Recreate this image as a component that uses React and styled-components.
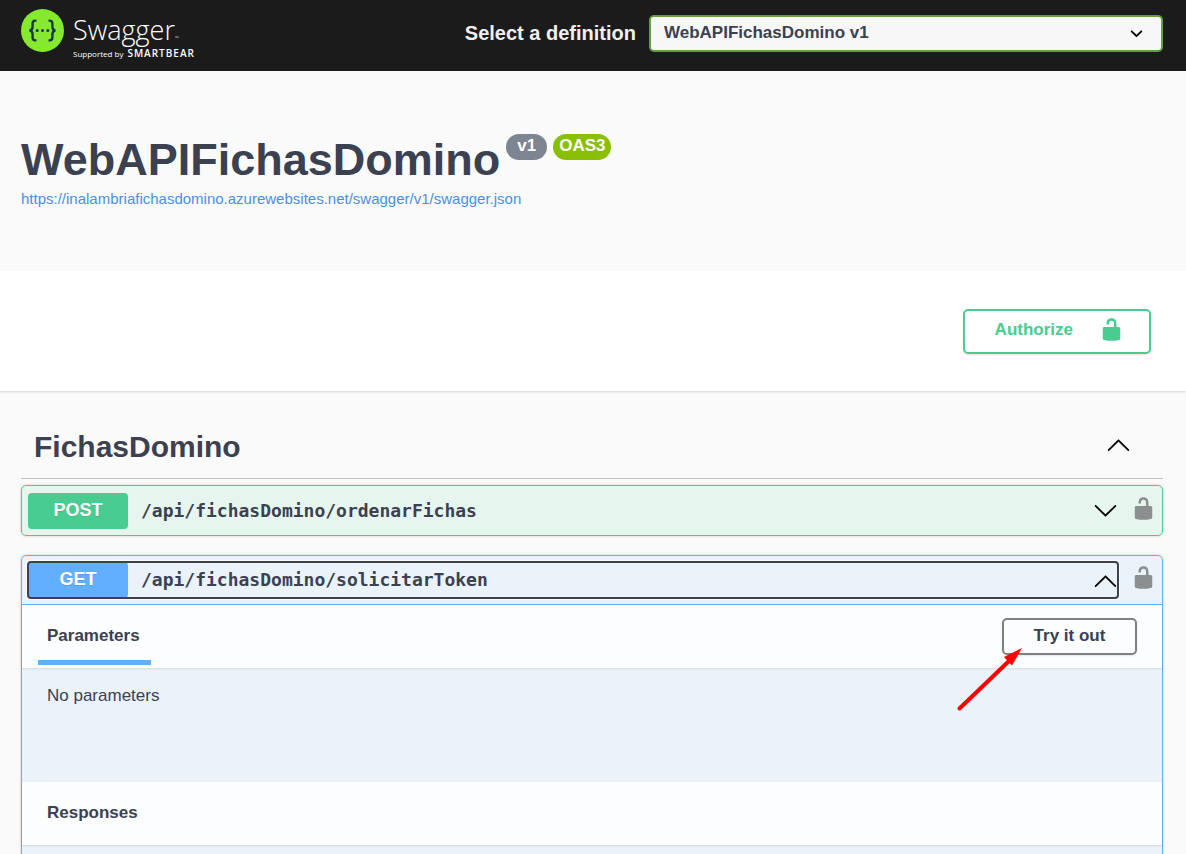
import React, { useState } from "react";
import styled, { createGlobalStyle } from "styled-components";

const GlobalStyle = createGlobalStyle`
  *, *::before, *::after { box-sizing: border-box; }
  body {
    margin: 0;
    background: #fafafa;
    color: #3b4151;
    font-family: "Liberation Sans", Arial, sans-serif;
    font-size: 17px;
  }
  button, select { font: inherit; color: inherit; }
  h1, h2, h3, p { margin: 0; }
`;

const methodColors = { POST: "73, 204, 144", GET: "97, 175, 254" };

const Topbar = styled.header`
  display: flex;
  align-items: flex-start;
  justify-content: space-between;
  height: 71px;
  padding: 0 23px 0 21px;
  background: #1b1b1b;
`;

const Logo = styled.a`
  display: flex;
  gap: 9px;
  padding-top: 9px;
  color: #fff;
  font-family: "Open Sans", sans-serif;
  text-decoration: none;
`;

const LogoMark = styled.svg`
  width: 43px;
  height: 43px;
`;

const LogoText = styled.span`
  display: flex;
  flex-direction: column;
  padding-top: 4px;
`;

const Wordmark = styled.span`
  font-size: 27px;
  font-weight: 300;
  line-height: 34px;

  small {
    font-size: 5px;
    line-height: 1;
  }
`;

const Tagline = styled.span`
  display: flex;
  align-items: baseline;
  gap: 4px;
  font-size: 8px;
  line-height: 12px;

  b {
    font-size: 10px;
    font-weight: 600;
    letter-spacing: 1px;
  }
`;

const DefinitionForm = styled.form`
  display: flex;
  align-items: center;
  gap: 13px;
  padding-top: 15px;

  label {
    padding-bottom: 2px;
    color: #f0f0f0;
    font-size: 20px;
    font-weight: 700;
    line-height: 34px;
  }
`;

const SelectWrap = styled.div`
  position: relative;
  width: 45vw;
  max-width: 514px;

  select {
    display: block;
    width: 100%;
    height: 37px;
    padding: 0 50px 2px 13px;
    border: 2px solid #62a03f;
    border-radius: 5px;
    background: #f7f7f7;
    font-weight: 700;
    appearance: none;
  }

  svg {
    position: absolute;
    top: 6px;
    right: 14px;
    pointer-events: none;
  }
`;

const Info = styled.section`
  padding: 62px 23px 62px 21px;
`;

const TitleRow = styled.div`
  display: flex;
  align-items: flex-start;
  gap: 6px;

  h1 {
    padding-top: 1px;
    font-size: 45px;
    line-height: 52px;
  }
`;

const Badge = styled.span`
  padding: 0 ${(p) => (p.$green ? "6px" : "11px")};
  margin-top: 1px;
  border-radius: 26px;
  background: ${(p) => (p.$green ? "#89bf04" : "#7d8492")};
  color: #fff;
  font-weight: 700;
  line-height: 24px;
  height: 26px;
`;

const SpecLink = styled.a`
  display: block;
  margin-top: 3px;
  color: #4990e2;
  font-size: 15px;
  line-height: 20px;
  text-decoration: none;
`;

const SchemeBar = styled.section`
  display: flex;
  justify-content: flex-end;
  padding: 38px 35px 37px;
  background: #fff;
  box-shadow: 0 1px 2px rgba(0, 0, 0, 0.15);
`;

const AuthorizeButton = styled.button`
  display: flex;
  align-items: flex-start;
  gap: 26px;
  height: 45px;
  padding: 6px 25px 0 30px;
  border: 2px solid #49cc90;
  border-radius: 5px;
  background: transparent;
  box-shadow: 0 1px 2px rgba(0, 0, 0, 0.1);
  color: #49cc90;
  font-weight: 700;
  line-height: 26px;
`;

const Operations = styled.main`
  padding: 25px 23px 0 21px;
`;

const TagHeader = styled.div`
  display: flex;
  align-items: center;
  justify-content: space-between;
  height: 63px;
  margin-bottom: 6px;
  padding: 0 32px 0 13px;
  border-bottom: 1px solid rgba(59, 65, 81, 0.3);

  h2 {
    font-size: 30px;
    line-height: 36px;
  }
`;

const IconButton = styled.button`
  display: flex;
  padding: 0 0 5px;
  border: 0;
  background: none;
  color: ${(p) => p.$color || "#000"};
`;

const OpBlock = styled.article`
  margin-bottom: 19px;
  border: 1px solid rgb(${(p) => methodColors[p.$method]});
  border-radius: 5px;
  background: rgba(${(p) => methodColors[p.$method]}, 0.1);
  box-shadow: 0 0 3px rgba(0, 0, 0, 0.19);
`;

const Summary = styled.div`
  display: flex;
  align-items: center;
  gap: 13px;
  padding: ${(p) => (p.$open ? "6px" : "7px 6px 6px")};
  border-bottom: ${(p) =>
    p.$open ? `1px solid rgb(${methodColors[p.$method]})` : "0"};
`;

const SummaryControl = styled.button`
  display: flex;
  flex: 1;
  align-items: center;
  gap: 13px;
  min-width: 0;
  padding: 0;
  border: 0;
  border-radius: 3px;
  background: none;
  text-align: left;
  outline: ${(p) => (p.$focused ? "2px solid #3b4151" : "none")};
  outline-offset: -1px;
  box-shadow: ${(p) => (p.$focused ? "0 0 0 2px #fff" : "none")};
`;

const Method = styled.span`
  width: 100px;
  height: 36px;
  border-radius: 4px;
  background: rgb(${(p) => methodColors[p.$method]});
  color: #fff;
  font-size: 18px;
  font-weight: 700;
  line-height: 34px;
  text-align: center;
  text-shadow: 0 1px 0 rgba(0, 0, 0, 0.1);
`;

const Path = styled.span`
  flex: 1;
  padding-bottom: 2px;
  font-family: "DejaVu Sans Mono", monospace;
  font-size: 18px;
  font-weight: 700;
`;

const SectionHeader = styled.div`
  display: flex;
  align-items: center;
  justify-content: space-between;
  height: 63px;
  padding: 0 25px 0 16px;
  background: rgba(255, 255, 255, 0.8);
  box-shadow: 0 1px 2px rgba(0, 0, 0, 0.1);
`;

const SectionTitle = styled.h3`
  align-self: stretch;
  margin-bottom: 3px;
  padding: 0 11px 0 9px;
  border-bottom: 5px solid ${(p) => (p.$active ? "#61affe" : "transparent")};
  font-size: 17px;
  line-height: 62px;
  height: 60px;
`;

const TryWrap = styled.div`
  position: relative;
`;

const TryButton = styled.button`
  display: block;
  height: 37px;
  width: 135px;
  padding: 0 0 2px;
  border: 2px solid #808080;
  border-radius: 5px;
  background: transparent;
  box-shadow: 0 1px 2px rgba(0, 0, 0, 0.1);
  font-weight: 700;
`;

const Pointer = styled.svg`
  position: absolute;
  top: 28px;
  left: -48px;
  pointer-events: none;
`;

const Parameters = styled.div`
  height: 114px;
  padding: 16px 25px;
  line-height: 24px;
`;

const ResponsesBody = styled.div`
  height: 60px;
`;

const Lock = () => (
  <svg width="25" height="25" viewBox="0 0 20 20" fill="currentColor" aria-hidden="true">
    <path d="M15.8 8H14V5.6C14 2.703 12.665 1 10 1 7.334 1 6 2.703 6 5.6V6h2v-.801C8 3.754 8.797 3 10 3c1.203 0 2 .754 2 2.199V8H4c-.553 0-1 .646-1 1.199V17c0 .549.428 1.139.951 1.307l1.197.387C5.672 18.861 6.55 19 7.1 19h5.8c.549 0 1.428-.139 1.951-.307l1.196-.387c.524-.167.953-.757.953-1.306V9.199C17 8.646 16.352 8 15.8 8z" />
  </svg>
);

const Arrow = ({ up }) => (
  <svg width="25" height="25" viewBox="0 0 20 20" fill="#000" aria-hidden="true">
    <path
      transform={up ? undefined : "rotate(180 10 10)"}
      d="M17.418 14.908c.272.268.709.268.979 0s.271-.701 0-.969l-7.908-7.83c-.27-.268-.707-.268-.979 0l-7.908 7.83c-.27.268-.27.701 0 .969.271.268.709.268.979 0L10 7.767l7.418 7.141z"
    />
  </svg>
);

const SwaggerMark = () => (
  <LogoMark viewBox="0 0 43 43" aria-hidden="true">
    <circle cx="21.5" cy="21.5" r="21.5" fill="#85ea2d" />
    <g fill="none" stroke="#173647" strokeWidth="2.4">
      <path d="M15.5 11.6h-1.2c-2 0-2.7 1-2.7 2.9v3.2c0 2.4-.9 3.6-3.1 3.8 2.2.2 3.1 1.4 3.1 3.8v3.2c0 1.900.7 2.9 2.7 2.9h1.2" />
      <path d="M27.5 11.6h1.2c2 0 2.7 1 2.7 2.9v3.2c0 2.4.9 3.6 3.1 3.8-2.2.2-3.1 1.4-3.1 3.8v3.2c0 1.900-.7 2.9-2.7 2.9h-1.2" />
    </g>
    <g fill="#173647">
      <circle cx="16.2" cy="21.5" r="1.5" />
      <circle cx="21.5" cy="21.5" r="1.5" />
      <circle cx="26.8" cy="21.5" r="1.5" />
    </g>
  </LogoMark>
);

function Operation({ method, path, open, focused, onToggle, children }) {
  return (
    <OpBlock $method={method}>
      <Summary $method={method} $open={open}>
        <SummaryControl type="button" $focused={focused} aria-expanded={open} onClick={onToggle}>
          <Method $method={method}>{method}</Method>
          <Path>{path}</Path>
          <Arrow up={open} />
        </SummaryControl>
        <IconButton type="button" $color="#8b8f90" aria-label="Authorization">
          <Lock />
        </IconButton>
      </Summary>
      {open && children}
    </OpBlock>
  );
}

export default function App() {
  const [getOpen, setGetOpen] = useState(true);
  const [postOpen, setPostOpen] = useState(false);
  return (
    <>
      <GlobalStyle />
      <Topbar>
        <Logo href="#">
          <SwaggerMark />
          <LogoText>
            <Wordmark>Swagger<small>™</small></Wordmark>
            <Tagline>Supported by <b>SMARTBEAR</b></Tagline>
          </LogoText>
        </Logo>
        <DefinitionForm>
          <label htmlFor="definition">Select a definition</label>
          <SelectWrap>
            <select id="definition">
              <option>WebAPIFichasDomino v1</option>
            </select>
            <svg width="25" height="25" viewBox="0 0 20 20" aria-hidden="true">
              <path d="M13.418 7.859c.271-.268.709-.268.978 0 .27.268.272.701 0 .969l-3.908 3.83c-.27.268-.707.268-.979 0l-3.908-3.83c-.27-.267-.27-.701 0-.969.271-.268.709-.268.978 0L10 11l3.418-3.141z" />
            </svg>
          </SelectWrap>
        </DefinitionForm>
      </Topbar>
      <Info>
        <TitleRow>
          <h1>WebAPIFichasDomino</h1>
          <Badge>v1</Badge>
          <Badge $green>OAS3</Badge>
        </TitleRow>
        <SpecLink href="#">
          https://inalambriafichasdomino.azurewebsites.net/swagger/v1/swagger.json
        </SpecLink>
      </Info>
      <SchemeBar>
        <AuthorizeButton type="button">
          Authorize
          <Lock />
        </AuthorizeButton>
      </SchemeBar>
      <Operations>
        <TagHeader>
          <h2>FichasDomino</h2>
          <IconButton type="button" aria-label="Collapse operations">
            <Arrow up />
          </IconButton>
        </TagHeader>
        <Operation
          method="POST"
          path="/api/fichasDomino/ordenarFichas"
          open={postOpen}
          onToggle={() => setPostOpen(!postOpen)}
        />
        <Operation
          method="GET"
          path="/api/fichasDomino/solicitarToken"
          open={getOpen}
          focused
          onToggle={() => setGetOpen(!getOpen)}
        >
          <SectionHeader>
            <SectionTitle $active>Parameters</SectionTitle>
            <TryWrap>
              <TryButton type="button">Try it out</TryButton>
              <Pointer width="72" height="68" viewBox="0 0 72 68" aria-hidden="true">
                <path d="M5.500 62.500L56 14" stroke="#f00" strokeWidth="4" strokeLinecap="round" />
                <path d="M68 2L50 11L53.500 15L58 19.500Z" fill="#f00" />
              </Pointer>
            </TryWrap>
          </SectionHeader>
          <Parameters>
            <p>No parameters</p>
          </Parameters>
          <SectionHeader>
            <SectionTitle>Responses</SectionTitle>
          </SectionHeader>
          <ResponsesBody />
        </Operation>
      </Operations>
    </>
  );
}
